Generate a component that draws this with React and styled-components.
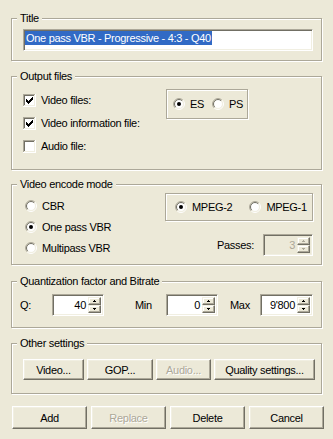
import React from "react";
import styled, { createGlobalStyle } from "styled-components";

const GlobalStyle = createGlobalStyle`
  html, body {
    margin: 0;
    padding: 0;
    background: #ECE9D8;
  }
  body {
    font-family: "Liberation Sans", Arial, sans-serif;
    font-size: 11px;
    letter-spacing: -0.3px;
    color: #000;
  }
`;

const Dialog = styled.div`
  width: 333px;
  height: 439px;
  box-sizing: border-box;
  padding: 12px 0 0 11px;
  display: flex;
  flex-direction: column;
`;

const Group = styled.fieldset`
  margin: ${({ $top }) => $top}px 0 0 0;
  padding: 0;
  width: 311px;
  box-sizing: border-box;
  min-inline-size: 0;
  border: 1px solid #ACA899;
  box-shadow: 1px 1px 0 #fff, inset 1px 1px 0 #fff;
`;

const Legend = styled.legend`
  margin-left: 5px;
  padding: 0 3px;
  height: 13px;
  line-height: 13px;
  background: #ECE9D8;
`;

const Frame = styled.div`
  display: flex;
  align-items: center;
  box-sizing: border-box;
  width: ${({ $w }) => $w}px;
  height: ${({ $h }) => $h}px;
  padding-left: ${({ $pad }) => $pad}px;
  gap: ${({ $gap }) => $gap}px;
  border: 1px solid #ACA899;
  box-shadow: 1px 1px 0 #fff, inset 1px 1px 0 #fff;
`;

const Sunken = styled.div`
  box-sizing: border-box;
  border: 1px solid;
  border-color: #ACA899 #fff #fff #ACA899;
  box-shadow: inset 1px 1px 0 #716F64, inset -1px -1px 0 #F1EFE2;
`;

const TitleField = styled(Sunken)`
  margin: 4px 0 9px 11px;
  width: 290px;
  height: 22px;
  padding: 1px 0 0 1px;
  background: #fff;
`;

const Selected = styled.span`
  display: inline-block;
  padding: 0 1px;
  line-height: 14px;
  background: #316AC5;
  color: #fff;
`;

const OutputBody = styled.div`
  display: flex;
  align-items: flex-start;
  padding: 6px 0 16px 11px;
`;

const CheckList = styled.div`
  display: flex;
  flex-direction: column;
  gap: 10px;
  margin-top: 5px;
  width: 143px;
`;

const Option = styled.label`
  display: flex;
  align-items: center;
  gap: 5px;
  height: ${({ $h }) => $h || 12}px;
  line-height: 13px;
  white-space: nowrap;
`;

const EncodeBody = styled.div`
  display: flex;
  justify-content: space-between;
  padding: 0 8px 8px 13px;
`;

const RadioList = styled.div`
  display: flex;
  flex-direction: column;
  gap: 9px;
  padding-top: 9px;
`;

const RightColumn = styled.div`
  display: flex;
  flex-direction: column;
  margin-top: 2px;
`;

const PassesRow = styled.div`
  display: flex;
  justify-content: flex-end;
  align-items: center;
  gap: 9px;
  margin-top: 13px;
`;

const Label = styled.span`
  display: inline-block;
  width: ${({ $w }) => ($w ? `${$w}px` : "auto")};
  margin-left: ${({ $ml }) => $ml || 0}px;
  color: ${({ $disabled }) => ($disabled ? "#ACA899" : "#000")};
`;

const QuantBody = styled.div`
  display: flex;
  align-items: center;
  padding: 6px 0 11px 8px;
`;

const Spin = styled(Sunken)`
  display: flex;
  width: ${({ $w }) => $w}px;
  height: 22px;
  padding: 2px;
  background: ${({ $disabled }) => ($disabled ? "#ECE9D8" : "#fff")};
`;

const SpinValue = styled.div`
  flex: 1;
  text-align: right;
  line-height: 17px;
  padding-right: 2px;
  color: ${({ $disabled }) => ($disabled ? "#ACA899" : "#000")};
`;

const SpinButtons = styled.div`
  display: flex;
  flex-direction: column;
  width: 13px;
`;

const SpinButton = styled.div`
  flex: 1;
  display: flex;
  align-items: center;
  justify-content: center;
  box-sizing: border-box;
  background: #ECE9D8;
  border: 1px solid;
  border-color: #F1EFE2 #716F64 #716F64 #F1EFE2;
  box-shadow: inset -1px -1px 0 #ACA899, inset 1px 1px 0 #fff;
`;

const ButtonRow = styled.div`
  display: flex;
  gap: ${({ $gap }) => $gap}px;
  padding: ${({ $pad }) => $pad};
`;

const Button = styled.button`
  appearance: none;
  box-sizing: border-box;
  width: ${({ $w }) => $w}px;
  height: ${({ $h }) => $h}px;
  padding: 0;
  margin: 0;
  font: inherit;
  letter-spacing: inherit;
  background: #ECE9D8;
  border: 1px solid;
  border-color: #fff #716F64 #716F64 #fff;
  border-radius: 0;
  box-shadow: inset -1px -1px 0 #ACA899, inset 1px 1px 0 #F1EFE2;
  color: ${({ disabled }) => (disabled ? "#ACA899" : "#000")};
  text-shadow: ${({ disabled }) => (disabled ? "1px 1px 0 #fff" : "none")};
`;

const CheckIcon = ({ checked }) => (
  <svg width="13" height="13" viewBox="0 0 13 13" shapeRendering="crispEdges">
    <rect x="2" y="2" width="9" height="9" fill="#fff" />
    <rect x="0" y="0" width="12" height="1" fill="#ACA899" />
    <rect x="0" y="0" width="1" height="12" fill="#ACA899" />
    <rect x="1" y="1" width="10" height="1" fill="#716F64" />
    <rect x="1" y="1" width="1" height="10" fill="#716F64" />
    <rect x="1" y="11" width="11" height="1" fill="#F1EFE2" />
    <rect x="11" y="1" width="1" height="11" fill="#F1EFE2" />
    <rect x="0" y="12" width="13" height="1" fill="#fff" />
    <rect x="12" y="0" width="1" height="13" fill="#fff" />
    {checked &&
      [5, 6, 7, 6, 5, 4, 3].map((y, i) => (
        <rect key={i} x={3 + i} y={y} width="1" height="3" fill="#000" />
      ))}
  </svg>
);

const RadioIcon = ({ checked }) => (
  <svg width="12" height="12" viewBox="0 0 12 12">
    <circle cx="6" cy="6" r="4.5" fill="#fff" />
    <path d="M2.111 9.889A5.5 5.5 0 0 1 9.889 2.111" fill="none" stroke="#ACA899" />
    <path d="M9.889 2.111A5.5 5.5 0 0 1 2.111 9.889" fill="none" stroke="#fff" />
    <path d="M2.818 9.182A4.5 4.5 0 0 1 9.182 2.818" fill="none" stroke="#716F64" />
    <path d="M9.182 2.818A4.5 4.5 0 0 1 2.818 9.182" fill="none" stroke="#F1EFE2" />
    {checked && <circle cx="6" cy="6" r="2" fill="#000" />}
  </svg>
);

const Arrow = ({ up, disabled }) => {
  const fill = disabled ? "#ACA899" : "#000";
  return (
    <svg width="3" height="2" viewBox="0 0 3 2" shapeRendering="crispEdges">
      {up ? (
        <>
          <rect x="1" y="0" width="1" height="1" fill={fill} />
          <rect x="0" y="1" width="3" height="1" fill={fill} />
        </>
      ) : (
        <>
          <rect x="0" y="0" width="3" height="1" fill={fill} />
          <rect x="1" y="1" width="1" height="1" fill={fill} />
        </>
      )}
    </svg>
  );
};

const Check = ({ checked, children }) => (
  <Option $h={13}>
    <CheckIcon checked={checked} />
    <span>{children}</span>
  </Option>
);

const Radio = ({ checked, children }) => (
  <Option>
    <RadioIcon checked={checked} />
    <span>{children}</span>
  </Option>
);

const SpinBox = ({ value, width, disabled }) => (
  <Spin $w={width} $disabled={disabled}>
    <SpinValue $disabled={disabled}>{value}</SpinValue>
    <SpinButtons>
      <SpinButton>
        <Arrow up disabled={disabled} />
      </SpinButton>
      <SpinButton>
        <Arrow disabled={disabled} />
      </SpinButton>
    </SpinButtons>
  </Spin>
);

export default function App() {
  return (
    <>
      <GlobalStyle />
      <Dialog>
        <Group $top={0}>
          <Legend>Title</Legend>
          <TitleField>
            <Selected>One pass VBR - Progressive - 4:3 - Q40</Selected>
          </TitleField>
        </Group>

        <Group $top={9}>
          <Legend>Output files</Legend>
          <OutputBody>
            <CheckList>
              <Check checked>Video files:</Check>
              <Check checked>Video information file:</Check>
              <Check>Audio file:</Check>
            </CheckList>
            <Frame $w={82} $h={30} $pad={6} $gap={8}>
              <Radio checked>ES</Radio>
              <Radio>PS</Radio>
            </Frame>
          </OutputBody>
        </Group>

        <Group $top={8}>
          <Legend>Video encode mode</Legend>
          <EncodeBody>
            <RadioList>
              <Radio>CBR</Radio>
              <Radio checked>One pass VBR</Radio>
              <Radio>Multipass VBR</Radio>
            </RadioList>
            <RightColumn>
              <Frame $w={148} $h={28} $pad={9} $gap={17}>
                <Radio checked>MPEG-2</Radio>
                <Radio>MPEG-1</Radio>
              </Frame>
              <PassesRow>
                <Label>Passes:</Label>
                <SpinBox value="3" width={50} disabled />
              </PassesRow>
            </RightColumn>
          </EncodeBody>
        </Group>

        <Group $top={10}>
          <Legend>Quantization factor and Bitrate</Legend>
          <QuantBody>
            <Label $w={32}>Q:</Label>
            <SpinBox value="40" width={52} />
            <Label $w={31} $ml={31}>Min</Label>
            <SpinBox value="0" width={52} />
            <Label $w={30} $ml={12}>Max</Label>
            <SpinBox value="9'800" width={53} />
          </QuantBody>
        </Group>

        <Group $top={9}>
          <Legend>Other settings</Legend>
          <ButtonRow $gap={3} $pad="9px 0 13px 11px">
            <Button $w={61} $h={21}>Video...</Button>
            <Button $w={66} $h={21}>GOP...</Button>
            <Button $w={55} $h={21} disabled>Audio...</Button>
            <Button $w={101} $h={21}>Quality settings...</Button>
          </ButtonRow>
        </Group>

        <ButtonRow $gap={4} $pad="12px 0 0 1px">
          <Button $w={75} $h={23}>Add</Button>
          <Button $w={75} $h={23} disabled>Replace</Button>
          <Button $w={75} $h={23}>Delete</Button>
          <Button $w={75} $h={23}>Cancel</Button>
        </ButtonRow>
      </Dialog>
    </>
  );
}
